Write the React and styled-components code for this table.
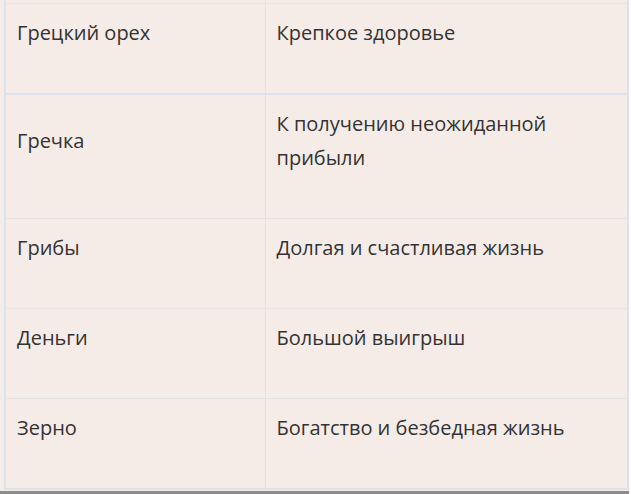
import React from 'react'
import styled, { createGlobalStyle } from 'styled-components'

const rows = [
  { item: 'Грецкий орех', meaning: 'Крепкое здоровье', thick: true },
  { item: 'Гречка', meaning: 'К получению неожиданной прибыли' },
  { item: 'Грибы', meaning: 'Долгая и счастливая жизнь' },
  { item: 'Деньги', meaning: 'Большой выигрыш' },
  { item: 'Зерно', meaning: 'Богатство и безбедная жизнь' },
]

const GlobalStyle = createGlobalStyle`
  html, body {
    margin: 0;
    padding: 0;
    background: #fbfbfc;
  }
  body {
    font-family: 'Open Sans', 'Noto Sans', sans-serif;
  }
`

const Frame = styled.div`
  width: 629px;
  height: 491px;
  overflow: hidden;
  background: #f6ece7;
  border-bottom: 3px solid #8c8c8c;
`

const Table = styled.table`
  border-collapse: collapse;
  margin-left: 4px;
  width: 625px;
  border-left: 2px solid #dde2ea;
  border-right: 2px solid #dde2ea;
  border-bottom: 2px solid #dde2ea;
  table-layout: fixed;
`

const Row = styled.tr`
  border-bottom: ${(p) => (p.$thick ? '2px solid #dde2ea' : '1px solid #e4e2e2')};
`

const CutRow = styled.tr`
  border-bottom: 1px solid #e4e2e2;
`

const CutCell = styled.td`
  height: 3px;
  padding: 0;
  border-right: 1px solid #e4e2e2;
`

const Cell = styled.td`
  padding: 12px 11px 43px;
  vertical-align: middle;
  font-size: 20px;
  line-height: 34px;
  color: #333;
  border-right: 1px solid #e4e2e2;
`

const App = () => (
  <>
    <GlobalStyle />
    <Frame>
      <Table>
        <colgroup>
          <col style={{ width: 260 }} />
          <col />
        </colgroup>
        <tbody>
          <CutRow>
            <CutCell />
            <CutCell />
          </CutRow>
          {rows.map((r) => (
            <Row key={r.item} $thick={r.thick}>
              <Cell>{r.item}</Cell>
              <Cell>{r.meaning}</Cell>
            </Row>
          ))}
        </tbody>
      </Table>
    </Frame>
  </>
)

export default App
